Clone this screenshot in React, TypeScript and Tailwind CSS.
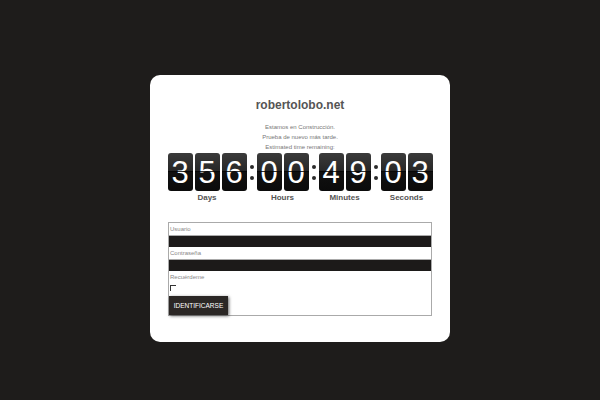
export default function App() {
  const groups = [
    { label: "Days", digits: ["3", "5", "6"] },
    { label: "Hours", digits: ["0", "0"] },
    { label: "Minutes", digits: ["4", "9"] },
    { label: "Seconds", digits: ["0", "3"] },
  ];

  return (
    <div
      className="min-h-[400px] w-full bg-[#1e1c1b] pt-[75px]"
      style={{ fontFamily: '"Liberation Sans", Arial, sans-serif' }}
    >
      <div className="mx-auto flex h-[267px] w-[300px] flex-col items-center rounded-[10px] bg-white">
        <div className="mt-[22px] text-[12px] font-bold leading-[16px] text-[#555]">
          robertolobo.net
        </div>

        <div className="mt-[9px] text-center text-[6px] leading-[10px] text-[#777]">
          <p>Estamos en Construcción.</p>
          <p>Prueba de nuevo más tarde.</p>
          <p>Estimated time remaining:</p>
        </div>

        {/* countdown */}
        <div className="mt-[1px] flex items-start">
          {groups.map((g, gi) => (
            <div key={g.label} className="flex items-start">
              {gi > 0 && (
                <div className="flex h-[38px] w-[10px] flex-col items-center justify-center gap-[7px]">
                  <span className="h-[4px] w-[4px] rounded-full bg-[#2a2a2a]" />
                  <span className="h-[4px] w-[4px] rounded-full bg-[#2a2a2a]" />
                </div>
              )}
              <div className="flex flex-col items-center">
                <div className="flex gap-[2px]">
                  {g.digits.map((d, i) => (
                    <div
                      key={i}
                      className="relative flex h-[38px] w-[25px] items-center justify-center overflow-hidden rounded-[3px] bg-[linear-gradient(to_bottom,#3b3b3b_0%,#262626_50%,#111_50%,#0b0b0b_100%)] text-[31px] leading-none text-white"
                    >
                      {d}
                      <span className="absolute left-0 right-0 top-[18px] h-[1px] bg-black/80" />
                    </div>
                  ))}
                </div>
                <div className="mt-[2px] text-[8px] font-bold leading-[10px] text-[#555]">
                  {g.label}
                </div>
              </div>
            </div>
          ))}
        </div>

        {/* login form */}
        <form className="mt-[19px] flex w-[264px] flex-col border border-[#aaa] text-[6px] text-[#888]">
          <label className="h-[12px] pl-[1px] leading-[12px]">Usuario</label>
          <div className="h-[12px] border-t border-[#aaa] bg-[#1c1a19]" />
          <label className="h-[12px] pl-[1px] leading-[12px]">Contraseña</label>
          <div className="h-[12px] border-t border-[#aaa] bg-[#1c1a19]" />
          <label className="h-[13px] pl-[1px] leading-[13px]">Recuérdeme</label>
          <div className="mt-[1px] ml-[1px] h-[6px] w-[6px] border-l border-t border-[#333]" />
          <button
            type="button"
            className="mt-[5px] h-[19px] w-[59px] bg-[#2b2725] text-[6.5px] text-white shadow-[1px_1px_3px_rgba(0,0,0,0.6)]"
          >
            IDENTIFICARSE
          </button>
        </form>
      </div>
    </div>
  );
}
